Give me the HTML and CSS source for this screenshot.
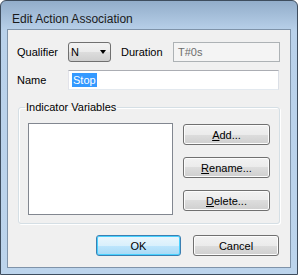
FILE: index.html
```html
<!DOCTYPE html>
<html lang="en">
<head>
    <meta charset="UTF-8">
    <title>Edit Action Association</title>
    <link rel="stylesheet" href="styles.css">
</head>
<body>
    <div class="window">
        <div class="titlebar">Edit Action Association</div>
        <div class="client">
            <div class="row">
                <span class="label label-first">Qualifier</span>
                <div class="combo">
                    <span>N</span>
                    <span class="arrow"></span>
                </div>
                <span class="label label-dur">Duration</span>
                <div class="field field-disabled">T#0s</div>
            </div>
            <div class="row row-name">
                <span class="label label-first">Name</span>
                <div class="field field-name"><span class="sel">Stop</span></div>
            </div>
            <fieldset class="group">
                <legend>Indicator Variables</legend>
                <div class="group-body">
                    <div class="listbox"></div>
                    <div class="side-buttons">
                        <button class="btn"><u>A</u>dd...</button>
                        <button class="btn"><u>R</u>ename...</button>
                        <button class="btn"><u>D</u>elete...</button>
                    </div>
                </div>
            </fieldset>
            <div class="actions">
                <button class="btn btn-default">OK</button>
                <button class="btn btn-cancel">Cancel</button>
            </div>
        </div>
    </div>
</body>
</html>
```

FILE: styles.css
```css
body {
    margin: 0;
    font-family: "Liberation Sans", Arial, sans-serif;
    font-size: 11px;
    color: #000;
}

.window {
    width: 298px;
    height: 275px;
    box-sizing: border-box;
    border: 1px solid #3e4d5e;
    border-radius: 6px 6px 0 0;
    background: linear-gradient(#92adca, #b9d1ea 30px, #bcd4ec);
    display: flex;
    flex-direction: column;
}

.titlebar {
    height: 28px;
    box-sizing: border-box;
    padding: 11px 0 0 11px;
    line-height: 14px;
    font-size: 12px;
    color: #1a1a1a;
}

.client {
    flex: 1;
    margin: 0 6px 6px;
    border: 1px solid #7f93a9;
    background: #f0f0f0;
    padding: 12px 0 0 9px;
}

.row {
    display: flex;
    align-items: center;
    height: 20px;
}

.row-name {
    margin-top: 8px;
}

.label-first {
    width: 51px;
}

.label-dur {
    margin-left: 10px;
    width: 52px;
}

.combo {
    width: 43px;
    height: 20px;
    box-sizing: border-box;
    border: 1px solid #707070;
    border-radius: 3px;
    background: linear-gradient(#f2f2f2, #ebebeb 50%, #dddddd 50%, #cfcfcf);
    display: flex;
    align-items: center;
    justify-content: space-between;
    padding: 0 4px 0 2px;
}

.arrow {
    width: 0;
    height: 0;
    border-left: 3.5px solid transparent;
    border-right: 3.5px solid transparent;
    border-top: 4px solid #000;
}

.field {
    height: 20px;
    box-sizing: border-box;
    border: 1px solid #abadb3;
    border-color: #abadb3 #dbdfe6 #e3e9ef #e2e3ea;
    background: #fff;
    display: flex;
    align-items: center;
    padding-left: 3px;
}

.field-disabled {
    width: 107px;
    background: #f4f4f4;
    border-color: #adb2b5;
    color: #6d6d6d;
    padding-left: 4px;
}

.field-name {
    width: 211px;
}

.sel {
    background: #3399ff;
    color: #fff;
    line-height: 14px;
    padding: 0 1px;
}

.group {
    width: 262px;
    box-sizing: border-box;
    margin: 11px 0 0 1px;
    padding: 9px 9px 8px;
    border: 1px solid #d5dfe5;
    border-radius: 3px;
    box-shadow: inset 1px 1px #fff, 1px 1px #fff;
}

.group legend {
    margin-left: -3px;
    padding: 0 1px;
    line-height: 13px;
}

.group-body {
    display: flex;
}

.listbox {
    width: 145px;
    height: 92px;
    box-sizing: border-box;
    border: 1px solid #828790;
    background: #fff;
}

.side-buttons {
    margin: 1px 0 0 10px;
    display: flex;
    flex-direction: column;
    gap: 12px;
}

.btn {
    font-family: inherit;
    font-size: 11px;
    color: #000;
    width: 87px;
    height: 21px;
    box-sizing: border-box;
    border: 1px solid #707070;
    border-radius: 3px;
    background: linear-gradient(#f2f2f2, #ebebeb 50%, #dddddd 50%, #cfcfcf);
    box-shadow: inset 0 0 0 1px #fcfcfc;
    padding: 0;
}

.actions {
    display: flex;
    justify-content: flex-end;
    gap: 12px;
    margin-top: 11px;
    padding-right: 11px;
}

.btn-default {
    width: 85px;
    border-color: #3c7fb1;
    background: linear-gradient(#eaf6fd, #d9f0fc 50%, #bee6fd 50%, #a7d9f5);
    box-shadow: inset 0 0 0 1px #48d1ff;
}

.btn-cancel {
    width: 86px;
}
```
